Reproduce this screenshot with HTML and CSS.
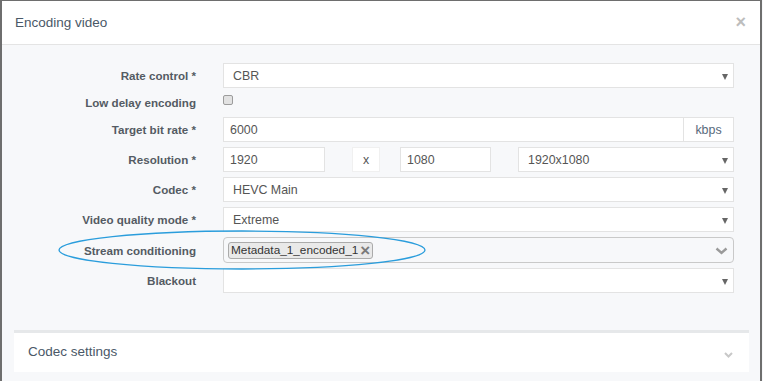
FILE: index.html
```html
<!DOCTYPE html>
<html lang="en">
<head>
    <meta charset="UTF-8">
    <title>Encoding video</title>
    <link rel="stylesheet" href="styles.css">
</head>
<body>
    <div class="modal">
        <div class="modal-header">
            <h4>Encoding video</h4>
            <span class="close">&times;</span>
        </div>

        <div class="modal-body">
            <div class="form">
                <label>Rate control *</label>
                <div class="select">CBR<span class="caret"></span></div>

                <label>Low delay encoding</label>
                <div class="check-wrap"><span class="checkbox"></span></div>

                <label>Target bit rate *</label>
                <div class="input-group">
                    <div class="input">6000</div>
                    <div class="addon">kbps</div>
                </div>

                <label>Resolution *</label>
                <div class="resolution">
                    <div class="input width">1920</div>
                    <div class="addon times">x</div>
                    <div class="input height">1080</div>
                    <div class="select preset">1920x1080<span class="caret"></span></div>
                </div>

                <label>Codec *</label>
                <div class="select">HEVC Main<span class="caret"></span></div>

                <label>Video quality mode *</label>
                <div class="select">Extreme<span class="caret"></span></div>

                <label>Stream conditioning</label>
                <div class="multi">
                    <span class="tag">Metadata_1_encoded_1<span class="tag-x">&times;</span></span>
                    <svg class="chevron" width="13" height="8" viewBox="0 0 13 8">
                        <polyline points="1.5,1.5 6.5,6 11.5,1.5" fill="none" stroke="#9a9a9a" stroke-width="2.4"/>
                    </svg>
                </div>

                <label>Blackout</label>
                <div class="select"><span class="caret"></span></div>
            </div>

            <div class="panel">
                <div class="panel-heading">
                    <span>Codec settings</span>
                    <svg width="9" height="6" viewBox="0 0 9 6">
                        <polyline points="1,1 4.5,4.5 8,1" fill="none" stroke="#c8c8c8" stroke-width="2"/>
                    </svg>
                </div>
            </div>
        </div>

        <!-- hand drawn highlight round the stream conditioning row -->
        <svg class="highlight" width="372" height="44" viewBox="0 0 372 44">
            <ellipse cx="185" cy="22" rx="183" ry="19" fill="none" stroke="#2a9ddc" stroke-width="1.3"/>
        </svg>
    </div>
</body>
</html>
```

FILE: styles.css
```css
body {
    margin: 0;
    font-family: "Liberation Sans", Arial, sans-serif;
    background: #f7f8fa;
}
.modal {
    position: relative;
    width: 758px;
    height: 380px;
    border-top: 1px solid #6e6e6e;
    border-left: 2px solid #6e6e6e;
    border-right: 2px solid #6e6e6e;
    background: #f7f8fa;
    overflow: hidden;
}
.modal-header {
    height: 43px;
    background: #fff;
    border-bottom: 1px solid #e4e4e4;
    display: flex;
    align-items: center;
    justify-content: space-between;
    padding: 0 14px 0 13px;
}
.modal-header h4 {
    margin: 0;
    font-size: 13.5px;
    font-weight: normal;
    color: #4a5867;
}
.close {
    color: #bdbdbd;
    font-size: 18px;
    font-weight: bold;
    line-height: 1;
    margin-top: -1px;
}
.modal-body {
    padding-top: 18px;
}
.form {
    display: grid;
    grid-template-columns: 194px 1fr;
    column-gap: 27px;
    row-gap: 5px;
    padding-right: 26px;
}
.form label {
    justify-self: end;
    align-self: center;
    font-size: 11.6px;
    font-weight: bold;
    color: #545b63;
}
.select,
.input,
.addon {
    box-sizing: border-box;
    height: 25px;
    background: #fff;
    border: 1px solid #e3e3e3;
    font-size: 12.4px;
    color: #555;
    display: flex;
    align-items: center;
}
.select {
    position: relative;
    padding-left: 9px;
}
.input {
    padding-left: 6px;
}
.caret {
    position: absolute;
    right: 5px;
    top: 10px;
    border-left: 3.5px solid transparent;
    border-right: 3.5px solid transparent;
    border-top: 6px solid #666;
}
.check-wrap {
    height: 19px;
    display: flex;
    align-items: center;
}
.checkbox {
    box-sizing: border-box;
    width: 10px;
    height: 10px;
    margin-top: -6px;
    border: 1px solid #9c9c9c;
    border-radius: 2px;
    background: #e2e2e2;
}
.input-group {
    display: flex;
}
.input-group .input {
    flex: 1;
}
.addon {
    justify-content: center;
    width: 50px;
    border-left: none;
    color: #586a7c;
}
.resolution {
    display: flex;
}
.resolution .width {
    width: 102px;
    margin-right: 27px;
}
.resolution .times {
    width: 28px;
    margin-right: 20px;
    border: 1px solid #f0f0f0;
    color: #555;
}
.resolution .height {
    width: 91px;
    margin-right: 27px;
}
.resolution .preset {
    flex: 1;
}
.multi {
    position: relative;
    box-sizing: border-box;
    height: 26px;
    border: 1px solid #c9c9c9;
    border-radius: 4px;
    background: #f7f8fa;
    display: flex;
    align-items: center;
    padding-left: 4px;
}
.tag {
    display: inline-flex;
    align-items: center;
    height: 17px;
    box-sizing: border-box;
    padding: 0 2px 0 2px;
    border: 1px solid #ababab;
    border-radius: 3px;
    background: #e9e9e9;
    font-size: 11.8px;
    color: #333;
}
.tag-x {
    margin-left: 2px;
    color: #7a7a7a;
    font-weight: bold;
    font-size: 17px;
    line-height: 1;
}
.chevron {
    position: absolute;
    right: 5px;
    top: 9px;
}
.panel {
    margin: 37px 11px 0 12px;
    border-top: 3px solid #e6e8ea;
    background: #fff;
}
.panel-heading {
    box-sizing: border-box;
    height: 39px;
    display: flex;
    align-items: center;
    justify-content: space-between;
    padding: 0 16px 3px 14px;
    font-size: 13.5px;
    color: #4a5867;
}
.panel-heading svg {
    margin-top: 8px;
}
.highlight {
    position: absolute;
    left: 55px;
    top: 227px;
}
```
